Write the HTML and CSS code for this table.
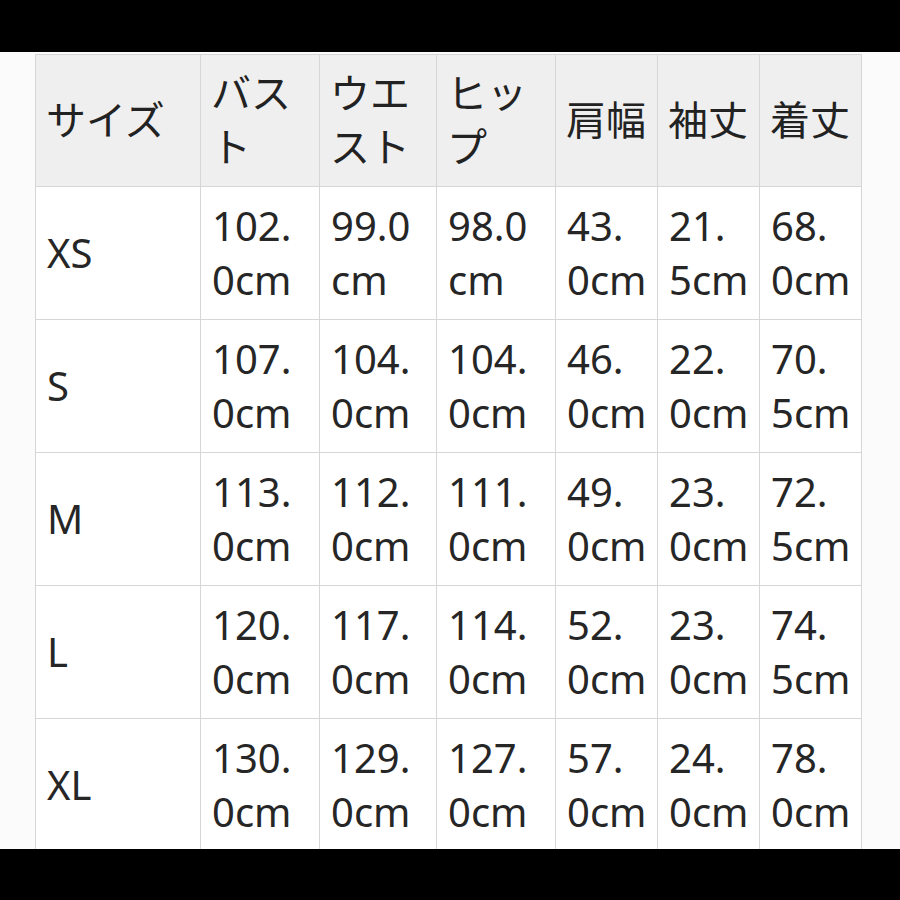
FILE: index.html
```html
<!DOCTYPE html>
<html lang="ja">
<head>
<meta charset="utf-8">
<title>サイズ表</title>
<link rel="stylesheet" href="styles.css">
</head>
<body>
<div class="bar"></div>
<main class="sheet">
  <table class="sizes">
    <colgroup>
      <col class="c-size">
      <col class="c-wide">
      <col class="c-mid">
      <col class="c-wide">
      <col class="c-narrow">
      <col class="c-narrow">
      <col class="c-narrow">
    </colgroup>
    <thead>
      <tr>
        <th>サイズ</th>
        <th>バス<br>ト</th>
        <th>ウエ<br>スト</th>
        <th>ヒッ<br>プ</th>
        <th>肩幅</th>
        <th>袖丈</th>
        <th>着丈</th>
      </tr>
    </thead>
    <tbody>
      <tr>
        <td>XS</td>
        <td>102.<br>0cm</td>
        <td>99.0<br>cm</td>
        <td>98.0<br>cm</td>
        <td>43.<br>0cm</td>
        <td>21.<br>5cm</td>
        <td>68.<br>0cm</td>
      </tr>
      <tr>
        <td>S</td>
        <td>107.<br>0cm</td>
        <td>104.<br>0cm</td>
        <td>104.<br>0cm</td>
        <td>46.<br>0cm</td>
        <td>22.<br>0cm</td>
        <td>70.<br>5cm</td>
      </tr>
      <tr>
        <td>M</td>
        <td>113.<br>0cm</td>
        <td>112.<br>0cm</td>
        <td>111.<br>0cm</td>
        <td>49.<br>0cm</td>
        <td>23.<br>0cm</td>
        <td>72.<br>5cm</td>
      </tr>
      <tr>
        <td>L</td>
        <td>120.<br>0cm</td>
        <td>117.<br>0cm</td>
        <td>114.<br>0cm</td>
        <td>52.<br>0cm</td>
        <td>23.<br>0cm</td>
        <td>74.<br>5cm</td>
      </tr>
      <tr>
        <td>XL</td>
        <td>130.<br>0cm</td>
        <td>129.<br>0cm</td>
        <td>127.<br>0cm</td>
        <td>57.<br>0cm</td>
        <td>24.<br>0cm</td>
        <td>78.<br>0cm</td>
      </tr>
    </tbody>
  </table>
</main>
<div class="bar"></div>
</body>
</html>
```

FILE: styles.css
```css
html, body {
  margin: 0;
  padding: 0;
  background: #000;
}

body {
  width: 900px;
  height: 900px;
  overflow: hidden;
  font-family: "Noto Sans", "Noto Sans CJK JP", sans-serif;
  color: #262626;
}

.bar {
  height: 52px;
  background: #000;
}

.sheet {
  height: 797px;
  overflow: hidden;
  background: #fbfbfb;
  padding: 2px 0 0 35px;
  box-sizing: border-box;
}

.sizes {
  border-collapse: collapse;
  table-layout: fixed;
  width: 827px;
  background: #fff;
  font-size: 40px;
  line-height: 54px;
}

.c-size { width: 165px; }
.c-wide { width: 119px; }
.c-mid { width: 117px; }
.c-narrow { width: 102px; }

.sizes th,
.sizes td {
  border: 1px solid #d6d6d6;
  padding: 12px 0 12px 11px;
  text-align: left;
  vertical-align: middle;
  white-space: nowrap;
  font-weight: normal;
  height: 108px;
  box-sizing: content-box;
}

.sizes th {
  background: #efefef;
  color: #222;
  padding-top: 11px;
  padding-left: 10px;
}
```
